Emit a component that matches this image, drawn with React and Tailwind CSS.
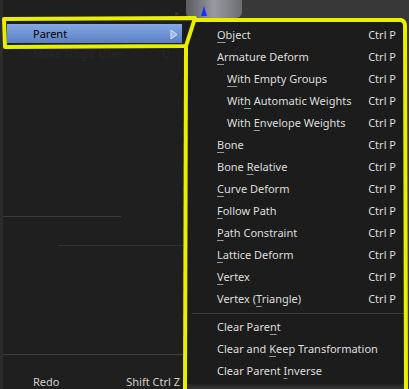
import React from "react";

const items = [
  { pre: "", u: "O", post: "bject", indent: false, key: "Ctrl P" },
  { pre: "", u: "A", post: "rmature Deform", indent: false, key: "Ctrl P" },
  { pre: "", u: "W", post: "ith Empty Groups", indent: true, key: "Ctrl P" },
  { pre: "Wit", u: "h", post: " Automatic Weights", indent: true, key: "Ctrl P" },
  { pre: "With ", u: "E", post: "nvelope Weights", indent: true, key: "Ctrl P" },
  { pre: "", u: "B", post: "one", indent: false, key: "Ctrl P" },
  { pre: "Bone ", u: "R", post: "elative", indent: false, key: "Ctrl P" },
  { pre: "", u: "C", post: "urve Deform", indent: false, key: "Ctrl P" },
  { pre: "", u: "F", post: "ollow Path", indent: false, key: "Ctrl P" },
  { pre: "", u: "P", post: "ath Constraint", indent: false, key: "Ctrl P" },
  { pre: "", u: "L", post: "attice Deform", indent: false, key: "Ctrl P" },
  { pre: "", u: "V", post: "ertex", indent: false, key: "Ctrl P" },
  { pre: "Vertex (", u: "T", post: "riangle)", indent: false, key: "Ctrl P" },
];

const clearItems = [
  { pre: "Clear Pare", u: "n", post: "t" },
  { pre: "Clear and ", u: "K", post: "eep Transformation" },
  { pre: "Clear Parent ", u: "I", post: "nverse" },
];

function Label({ pre, u, post }) {
  return (
    <span>
      {pre}
      <span className="underline decoration-[#9a9a9a] underline-offset-[3px]">{u}</span>
      {post}
    </span>
  );
}

function Row({ item }) {
  return (
    <div className={`flex items-center justify-between h-[22px] pr-[8px] ${item.indent ? "pl-[41px]" : "pl-[31px]"}`}>
      <Label {...item} />
      {item.key && <span>{item.key}</span>}
    </div>
  );
}

export default function App() {
  return (
    <div
      className="relative w-[409px] h-[389px] overflow-hidden bg-[#383838] flex text-[11px] text-[#dedede]"
      style={{ fontFamily: '"Noto Sans", "Open Sans", sans-serif' }}
    >
      {/* Left menu (behind) */}
      <div className="w-[186px] shrink-0 bg-[#1f1f1f] border-l-[3px] border-[#2c2c2c] flex flex-col">
        <div className="h-[24px] flex items-start justify-end pr-[6px] text-[#333]">
          <span className="text-[9px] mt-[6px]">▸</span>
        </div>
        <div className="h-[19px] mx-[4px] flex items-center justify-between pl-[26px] pr-[4px] pt-[1px] text-black bg-gradient-to-b from-[#86a9e4] to-[#5a80c4]">
          <span>Parent</span>
          <svg width="8" height="11" viewBox="0 0 8 11">
            <path d="M1 1 L7 5.5 L1 10 Z" fill="#9cb8e8" stroke="#d8e2f4" strokeWidth="1" />
          </svg>
        </div>
        <div className="h-[22px] flex items-center justify-between pl-[30px] pr-[16px] text-[#282828]">
          <span>Make Single User</span>
          <span>U</span>
        </div>
        <div className="h-[151px]" />
        <div className="h-px bg-[#3a3a3a] mr-[65px]" />
        <div className="h-[28px]" />
        <div className="h-px bg-[#333] ml-[55px]" />
        <div className="h-[108px]" />
        <div className="h-px bg-[#3c3c3c]" />
        <div className="h-[21px]" />
        <div className="flex items-start justify-between pl-[30px] pr-[6px] text-[#cfcfcf] leading-none">
          <span>Redo</span>
          <span>Shift Ctrl Z</span>
        </div>
      </div>

      {/* Right side: viewport strip + submenu */}
      <div className="flex-1 flex flex-col">
        <div className="h-[20px] shrink-0 flex items-start">
          <div className="w-[56px] h-[18px] bg-gradient-to-r from-[#5a5a60] via-[#9a9aa2] to-[#6c6c72] rounded-b-[6px] flex justify-center">
            <div className="w-0 h-0 mt-[6px] ml-[-20px] border-l-[3px] border-r-[3px] border-b-[10px] border-l-transparent border-r-transparent border-b-[#1a2cff]" />
          </div>
        </div>
        <div className="w-[218px] h-[364px] bg-[#1c1c1c] rounded-b-[3px] pt-[4px] flex flex-col shadow-[0_2px_4px_rgba(0,0,0,0.5)]">
          {items.map((it, i) => (
            <Row key={i} item={it} />
          ))}
          <div className="h-[6px] flex items-center">
            <div className="h-px w-full ml-[6px] bg-[#3a3a3a]" />
          </div>
          {clearItems.map((it, i) => (
            <Row key={i} item={it} />
          ))}
        </div>
      </div>

      {/* Yellow annotation */}
      <svg className="absolute inset-0 pointer-events-none" width="409" height="389" viewBox="0 0 409 389">
        <g fill="none" stroke="#e8f000" strokeWidth="4" strokeLinejoin="round">
          <path d="M4 19 L195 18 L186 46 L5 47 Z" />
          <path d="M186 46 L185 392" />
          <path d="M195 20 L401 20 Q405 21 405 26 L406 392" />
        </g>
      </svg>
    </div>
  );
}
